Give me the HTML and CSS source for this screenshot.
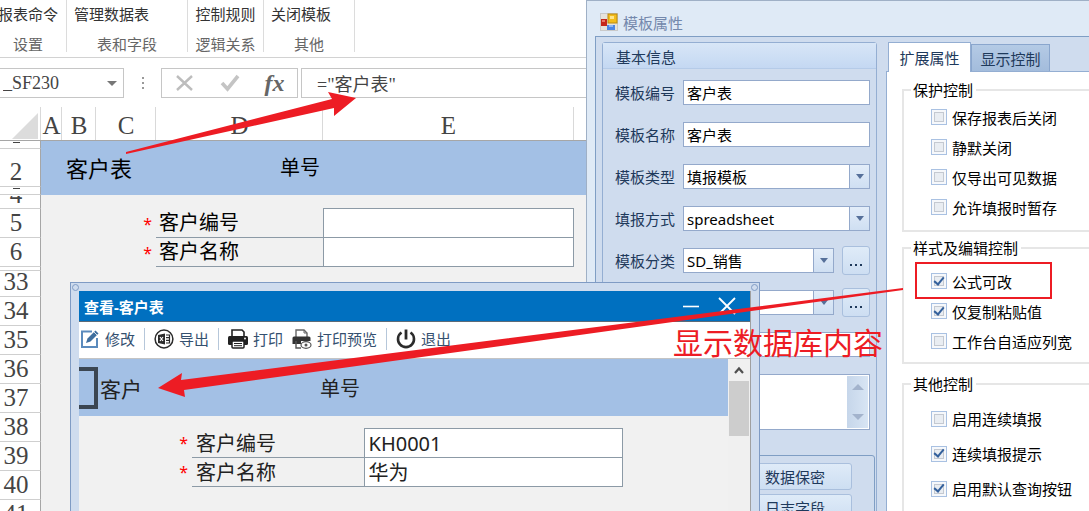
FILE: index.html
```html
<!DOCTYPE html>
<html lang="zh-CN">
<head>
  <meta charset="UTF-8">
  <meta name="viewport" content="width=device-width, initial-scale=1.0">
  <title>模板属性</title>
  <link rel="stylesheet" href="styles.css">
</head>
<body>
  <div class="desktop">

    <!-- 表格设计界面 -->
    <div class="workbook">
      <div class="ribbon">
        <div class="ribbon-group group-setting">
          <button class="ribbon-btn">报表命令</button>
          <span class="ribbon-name">设置</span>
        </div>
        <div class="ribbon-group group-table">
          <button class="ribbon-btn">管理数据表</button>
          <span class="ribbon-name">表和字段</span>
        </div>
        <div class="ribbon-group group-logic">
          <button class="ribbon-btn">控制规则</button>
          <span class="ribbon-name">逻辑关系</span>
        </div>
        <div class="ribbon-group group-other">
          <button class="ribbon-btn">关闭模板</button>
          <span class="ribbon-name">其他</span>
        </div>
      </div>

      <div class="formula-bar">
        <div class="name-box">
          <input type="text" value="_SF230" aria-label="名称框">
          <span class="caret"></span>
        </div>
        <span class="grip"><i></i><i></i><i></i></span>
        <div class="formula-tools">
          <button aria-label="取消">
            <svg width="20" height="18" viewBox="0 0 20 18"><path d="M2 2 L17 16 M17 2 L2 16" fill="none" stroke="#bdbdbd" stroke-width="2.4"/></svg>
          </button>
          <button aria-label="输入">
            <svg width="20" height="18" viewBox="0 0 20 18"><path d="M2 9 L7.500 15 L18 2" fill="none" stroke="#c4c4c4" stroke-width="3.600"/></svg>
          </button>
          <button class="fx" aria-label="插入函数">fx</button>
        </div>
        <input class="formula" type="text" value='="客户表"' aria-label="编辑栏">
      </div>

      <table class="sheet">
        <colgroup>
          <col class="col-head"><col class="col-a"><col class="col-b"><col class="col-c"><col class="col-d"><col class="col-e"><col>
        </colgroup>
        <thead>
          <tr>
            <th class="corner"><svg width="26" height="26" viewBox="0 0 26 26"><path d="M26 0 V26 H0 Z" fill="#dcdcdc"/></svg></th>
            <th>A</th><th>B</th><th>C</th><th>D</th><th>E</th><th></th>
          </tr>
        </thead>
        <tbody>
          <tr class="band row-thin"><th><div class="sliver"></div></th><td colspan="6"></td></tr>
          <tr class="band row-title"><th>2</th><td></td><td colspan="2" class="title">客户表</td><td class="number">单号</td><td></td><td></td></tr>
          <tr class="band row-thin"><th><div class="sliver"></div></th><td colspan="6"></td></tr>
          <tr class="row-short"><th><div class="clip">4</div></th><td colspan="4"></td><td class="edge"></td><td></td></tr>
          <tr><th>5</th><td></td><td></td><td class="star">*</td><td class="caption">客户编号</td><td class="field"></td><td></td></tr>
          <tr><th>6</th><td></td><td></td><td class="star">*</td><td class="caption">客户名称</td><td class="field"></td><td></td></tr>
          <tr class="row-gap"><th></th><td colspan="6"></td></tr>
          <tr class="row-first"><th>33</th><td colspan="6"></td></tr>
          <tr><th>34</th><td colspan="6"></td></tr>
          <tr><th>35</th><td colspan="6"></td></tr>
          <tr><th>36</th><td colspan="6"></td></tr>
          <tr><th>37</th><td colspan="6"></td></tr>
          <tr><th>38</th><td colspan="6"></td></tr>
          <tr><th>39</th><td colspan="6"></td></tr>
          <tr><th>40</th><td colspan="6"></td></tr>
          <tr><th>41</th><td colspan="6"></td></tr>
        </tbody>
      </table>
    </div>

    <!-- 模板属性窗口 -->
    <section class="props">
      <header class="props-title">
        <svg width="18" height="18" viewBox="0 0 18 18">
          <rect x="0.500" y="0.500" width="17" height="17" fill="#e6e3dc" stroke="#c9c9c9"/>
          <rect x="1" y="6" width="6" height="7" fill="#c5281c"/>
          <rect x="2" y="7" width="3" height="2" fill="#e8786a"/>
          <rect x="8" y="1" width="9" height="9" fill="#f3bd1c" stroke="#b98a10"/>
          <rect x="10" y="3" width="4" height="3" fill="#ffe58a"/>
          <rect x="7" y="12" width="8" height="5" fill="#4b86e6"/>
          <rect x="9" y="12" width="4" height="2" fill="#8db8f7"/>
        </svg>
        <span>模板属性</span>
      </header>
      <div class="props-body">
        <div class="panel">
          <h2>基本信息</h2>
          <div class="form">
            <div class="form-row">
              <label for="code">模板编号</label>
              <input type="text" id="code" value="客户表">
            </div>
            <div class="form-row">
              <label for="name">模板名称</label>
              <input type="text" id="name" value="客户表">
            </div>
            <div class="form-row">
              <label for="type">模板类型</label>
              <div class="combo"><select id="type"><option>填报模板</option></select><span class="drop"></span></div>
            </div>
            <div class="form-row">
              <label for="mode">填报方式</label>
              <div class="combo"><select id="mode"><option>spreadsheet</option></select><span class="drop"></span></div>
            </div>
            <div class="form-row">
              <label for="category">模板分类</label>
              <div class="combo"><select id="category"><option>SD_销售</option></select><span class="drop"></span></div>
              <button class="more" aria-label="选择分类"><i></i><i></i><i></i></button>
            </div>
            <div class="form-row">
              <span class="no-label"></span>
              <div class="combo"><select aria-label="选项"><option></option></select><span class="drop"></span></div>
              <button class="more" aria-label="选择"><i></i><i></i><i></i></button>
            </div>
            <div class="form-row">
              <span class="no-label"></span>
              <input type="text" aria-label="标题">
            </div>
            <div class="form-row memo-row">
              <span class="no-label"></span>
              <div class="memo">
                <textarea aria-label="说明"></textarea>
                <div class="memo-scroll"><i class="up"></i><i class="down"></i></div>
              </div>
            </div>
          </div>
          <div class="actions">
            <button>数据保密</button>
            <button>日志字段</button>
          </div>
        </div>

        <div class="tabs">
          <div class="tab-bar">
            <button class="tab active">扩展属性</button>
            <button class="tab">显示控制</button>
          </div>
          <div class="tab-page">
            <fieldset class="group-protect">
              <legend>保护控制</legend>
              <label><input type="checkbox">保存报表后关闭</label>
              <label><input type="checkbox">静默关闭</label>
              <label><input type="checkbox">仅导出可见数据</label>
              <label><input type="checkbox">允许填报时暂存</label>
            </fieldset>
            <fieldset class="group-style">
              <legend>样式及编辑控制</legend>
              <label><input type="checkbox" checked>公式可改</label>
              <label><input type="checkbox" checked>仅复制粘贴值</label>
              <label><input type="checkbox">工作台自适应列宽</label>
            </fieldset>
            <fieldset class="group-misc">
              <legend>其他控制</legend>
              <label><input type="checkbox">启用连续填报</label>
              <label><input type="checkbox" checked>连续填报提示</label>
              <label><input type="checkbox" checked>启用默认查询按钮</label>
            </fieldset>
          </div>
        </div>
      </div>
    </section>

    <!-- 查看窗口 -->
    <section class="viewer">
      <i class="handle handle-left"></i>
      <i class="handle handle-right"></i>
      <div class="viewer-frame">
        <header class="viewer-title">
          <span>查看-客户表</span>
          <button aria-label="最小化"><svg width="18" height="18" viewBox="0 0 18 18"><path d="M1 9.500 H17" stroke="#fff" stroke-width="1.600"/></svg></button>
          <button aria-label="关闭"><svg width="18" height="18" viewBox="0 0 18 18"><path d="M1 1 L17 17 M17 1 L1 17" stroke="#fff" stroke-width="1.800"/></svg></button>
        </header>
        <div class="toolbar">
          <button>
            <svg width="20" height="20" viewBox="0 0 20 20"><path d="M12 2.500 H2 V18 H17 V9" fill="none" stroke="#5b8bbd" stroke-width="2"/><path d="M6 14 L7.500 9.500 L15.500 1.500 L18.500 4.500 L10.500 12.500 Z" fill="#3f6f9f"/><path d="M14 3 L17 6" stroke="#fff" stroke-width="0.800"/></svg>
            修改
          </button>
          <i class="sep"></i>
          <button>
            <svg width="20" height="20" viewBox="0 0 20 20"><circle cx="10" cy="10" r="8.900" fill="#fff" stroke="#2b2b2b" stroke-width="1.500"/><path d="M4 6 L11 4.500 V15.500 L4 14 Z" fill="#2b2b2b"/><path d="M6 8 L9 12 M9 8 L6 12" stroke="#fff" stroke-width="1.200"/><path d="M12 6 H15.500 V14 H12 M12 8.700 H15 M12 11.300 H15" fill="none" stroke="#2b2b2b" stroke-width="1.200"/></svg>
            导出
          </button>
          <i class="sep"></i>
          <button>
            <svg width="20" height="20" viewBox="0 0 20 20"><path d="M4 7 V1 H14 L16 3 V7" fill="#fff" stroke="#222" stroke-width="1.600"/><rect x="0" y="7" width="20" height="9" rx="1.500" fill="#222"/><rect x="4" y="12" width="12" height="7" rx="1" fill="#fff" stroke="#222" stroke-width="1.500"/><path d="M6 14.500 H14 M6 16.700 H14" stroke="#222"/><circle cx="17" cy="9.500" r="0.900" fill="#fff"/></svg>
            打印
          </button>
          <button>
            <svg width="20" height="20" viewBox="0 0 20 20"><path d="M4 8 V1 H12 L15 4 V8" fill="#fff" stroke="#666" stroke-width="1.400"/><path d="M12 1 V4 H15" fill="none" stroke="#666"/><path d="M0.500 9 Q0.500 7.500 2 7.500 H17 Q18.500 7.500 18.500 9 V12 H9 V15 H0.500 Z" fill="#333"/><path d="M4 12 V19 H9" fill="none" stroke="#555" stroke-width="1.400"/><ellipse cx="14" cy="16" rx="5" ry="3.300" fill="#fff" stroke="#555" stroke-width="1.200"/><circle cx="14" cy="16" r="1.500" fill="#555"/></svg>
            打印预览
          </button>
          <i class="sep"></i>
          <button>
            <svg width="20" height="20" viewBox="0 0 20 20"><path d="M5.500 3.500 A8 8 0 1 0 14.500 3.500" fill="none" stroke="#2b2b2b" stroke-width="2.600"/><path d="M10 0.500 V10.500" stroke="#2b2b2b" stroke-width="2.800"/></svg>
            退出
          </button>
        </div>
        <div class="viewer-content">
          <div class="viewer-page">
            <div class="viewer-band">
              <i class="cursor-cell"></i>
              <span class="viewer-name">客户</span>
              <span class="viewer-number">单号</span>
            </div>
            <table class="record">
              <tr><td class="star">*</td><th>客户编号</th><td class="value">KH0001</td></tr>
              <tr><td class="star">*</td><th>客户名称</th><td class="value">华为</td></tr>
            </table>
          </div>
          <div class="scrollbar">
            <svg width="20" height="22" viewBox="0 0 20 22"><path d="M6 14 L10 9.500 L14 14" fill="none" stroke="#505050" stroke-width="2.200"/></svg>
            <i class="thumb"></i>
          </div>
        </div>
      </div>
    </section>

    <!-- 标注 -->
    <svg class="marks" width="1089" height="511" viewBox="0 0 1089 511">
      <path d="M126 152 L332 99 L328 92 L356 98 L334 116 L334 108 L126 154 Z" fill="#ed1c24"/>
      <path d="M903 288 L181 380 L182 373 L158 388 L185 397 L184 390 L903 290 Z" fill="#ed1c24"/>
      <rect x="916" y="263" width="135" height="35" fill="none" stroke="#ed1c24" stroke-width="2"/>
    </svg>
    <p class="note">显示数据库内容</p>
  </div>
</body>
</html>
```

FILE: styles.css
```css
*, *::before, *::after {
    box-sizing: border-box;
}
body {
    margin: 0;
    font-family: "Noto Sans", "Noto Sans CJK SC", sans-serif;
    font-size: 15px;
    color: #000;
}
button,
input,
select,
textarea {
    font: inherit;
    color: inherit;
    margin: 0;
    padding: 0;
    border: none;
    border-radius: 0;
    background: none;
    outline: none;
}
button {
    white-space: nowrap;
}
svg {
    display: block;
    flex: none;
}
.desktop {
    position: relative;
    height: 100vh;
    overflow: hidden;
    background: #fff;
}

/* ribbon */
.ribbon {
    display: flex;
    height: 58px;
    padding-bottom: 5px;
    border-bottom: 1px solid #d2d2d2;
}
.ribbon-group {
    display: flex;
    flex-direction: column;
    align-items: center;
    gap: 10px;
    padding-top: 4px;
    border-right: 1px solid #dcdcdc;
    line-height: 20px;
}
.ribbon-btn {
    color: #333;
    line-height: 20px;
}
.ribbon-name {
    color: #666;
}
.group-setting {
    width: 67px;
}
.group-setting .ribbon-btn {
    align-self: flex-end;
    margin-right: 8px;
}
.group-setting .ribbon-name {
    margin-right: 10px;
}
.group-table {
    width: 121px;
}
.group-table .ribbon-btn {
    align-self: flex-start;
    margin-left: 7px;
}
.group-logic {
    width: 76px;
}
.group-other {
    width: 91px;
}
.group-other .ribbon-btn {
    align-self: flex-start;
    margin-left: 7px;
}

/* formula bar */
.formula-bar {
    display: flex;
    height: 40px;
    padding-top: 10px;
    font-family: "Liberation Serif", "Noto Sans CJK SC", serif;
    font-size: 18px;
    color: #444;
}
.name-box {
    display: flex;
    align-items: center;
    width: 124px;
    padding: 0 6px 0 3px;
    border: 1px solid #c6c6c6;
    border-left: none;
}
.name-box input {
    flex: 1;
    min-width: 0;
}
.caret {
    border: 5px solid transparent;
    border-top-color: #777;
    border-bottom: none;
}
.grip {
    display: flex;
    flex-direction: column;
    justify-content: center;
    align-items: center;
    gap: 3px;
    width: 37px;
}
.grip i {
    width: 2px;
    height: 2px;
    background: #999;
}
.formula-tools {
    display: flex;
    justify-content: space-around;
    align-items: center;
    width: 137px;
    border: 1px solid #c6c6c6;
}
.fx {
    font-size: 24px;
    font-style: italic;
    font-weight: bold;
    line-height: 24px;
    color: #666;
}
.formula {
    flex: 1;
    min-width: 0;
    margin-left: 3px;
    padding-left: 15px;
    border: 1px solid #c6c6c6;
}

/* sheet */
.sheet {
    width: 100%;
    table-layout: fixed;
    border-collapse: separate;
    border-spacing: 0;
    background: #f1f1f1;
}
.col-head {
    width: 41px;
}
.col-a {
    width: 21px;
}
.col-b {
    width: 34px;
}
.col-c {
    width: 60px;
}
.col-d {
    width: 167px;
}
.col-e {
    width: 251px;
}
.sheet th,
.sheet td {
    height: 29px;
    padding: 0;
    line-height: 24px;
    white-space: nowrap;
}
.sheet th {
    background: #fff;
    font-family: "Liberation Serif", serif;
    font-size: 25px;
    font-weight: normal;
    color: #444;
}
.sheet thead th {
    height: 43px;
    padding-top: 14px;
    border-bottom: 1px solid #a6a6a6;
    background: linear-gradient(#d9d9d9, #d9d9d9) right bottom / 1px 33px no-repeat #fff;
}
.sheet .corner svg {
    margin: 0 3px 0 auto;
}
.sheet tbody th {
    padding-right: 8px;
    border-right: 1px solid #a6a6a6;
    border-bottom: 1px solid #cfcfcf;
}
.sheet .band td {
    background: #a3c0e5;
}
.sheet .row-thin th,
.sheet .row-thin td {
    height: 8px;
}
.sliver {
    width: 7px;
    height: 6px;
    margin: 0 auto;
    border-top: 1px solid #444;
}
.sheet .row-title th,
.sheet .row-title td {
    height: 38px;
}
.sheet .row-title th {
    padding-top: 8px;
}
.sheet .row-short th,
.sheet .row-short td {
    height: 14px;
}
.clip {
    display: flex;
    flex-direction: column;
    justify-content: flex-end;
    align-items: center;
    height: 8px;
    margin-bottom: 4px;
    line-height: 18px;
    overflow: hidden;
}
.sheet .row-gap th,
.sheet .row-gap td {
    height: 4px;
}
.sheet .row-first th,
.sheet .row-first td {
    height: 26px;
}
.sheet .row-first th {
    line-height: 20px;
    padding-bottom: 4px;
}
.sheet .title {
    padding-left: 4px;
    font-size: 22px;
}
.sheet .number {
    padding-right: 3px;
    font-size: 20px;
    text-align: right;
}
.sheet .star {
    padding-right: 4px;
    font-size: 16px;
    text-align: right;
}
.star {
    color: #f00;
}
.sheet .caption {
    padding-left: 3px;
    border-bottom: 1px solid #8c9aa6;
    font-size: 20px;
}
.sheet .edge {
    border-bottom: 1px solid #8c9aa6;
}
.sheet .field {
    border: 1px solid #8c9aa6;
    border-top: none;
    background: #fff;
}

/* template properties window */
.props {
    position: absolute;
    top: 0;
    right: 0;
    bottom: 0;
    left: 586px;
    display: flex;
    flex-direction: column;
    border-top: 1px solid #9fb0c6;
    border-left: 1px solid #9fb0c6;
    background: #dfeaf6;
    overflow: hidden;
}
.props-title {
    display: flex;
    align-items: center;
    gap: 5px;
    height: 35px;
    padding: 7px 0 0 13px;
    color: #7488ac;
}
.props-body {
    display: flex;
    flex: 1;
    min-height: 0;
    gap: 9px;
    margin-left: 8px;
    padding: 5px 0 0 6px;
    border-top: 1px solid #7f9ec4;
    border-left: 1px solid #7f9ec4;
    background: #cfdcee;
}
.panel {
    flex: none;
    width: 275px;
    height: 600px;
    border: 1px solid #94aed2;
    border-radius: 3px;
    color: #1e395b;
}
.panel h2 {
    height: 26px;
    margin: 0;
    padding: 2px 0 0 13px;
    border-bottom: 1px solid #b5cbe8;
    background: linear-gradient(#d8e6f7, #c4d8f2);
    font-size: 15px;
    font-weight: normal;
    line-height: 24px;
}
.form {
    display: flex;
    flex-direction: column;
    gap: 17px;
    padding: 11px 6px 0 12px;
}
.form-row {
    display: flex;
    align-items: center;
    gap: 8px;
    height: 25px;
}
.form-row label,
.no-label {
    flex: none;
    width: 60px;
    line-height: 24px;
}
.form-row input,
.combo,
.memo {
    flex: 1;
    min-width: 0;
    height: 25px;
    border: 1px solid #94a9cb;
    background: #fff;
    color: #000;
}
.form-row input {
    padding: 0 3px;
}
.combo {
    display: flex;
}
.combo select {
    flex: 1;
    min-width: 0;
    padding-left: 3px;
    appearance: none;
}
.drop {
    display: flex;
    justify-content: center;
    align-items: center;
    width: 20px;
    border-left: 1px solid #94a9cb;
    background: linear-gradient(#e3edf9, #cfdff2);
}
.drop::after {
    content: "";
    border: 4px solid transparent;
    border-top: 5px solid #56709a;
    border-bottom: none;
}
.more {
    display: flex;
    justify-content: center;
    align-items: center;
    gap: 3px;
    width: 28px;
    height: 29px;
    padding-top: 8px;
    border: 1px solid #a9bfdd;
    border-radius: 3px;
    background: linear-gradient(#dfebf8, #cddef2);
}
.more i {
    width: 2px;
    height: 2px;
    background: #1e395b;
}
.form-row.memo-row {
    height: 56px;
}
.memo {
    display: flex;
    height: 56px;
    padding: 1px;
}
.memo textarea {
    flex: 1;
    min-width: 0;
    resize: none;
}
.memo-scroll {
    display: flex;
    flex-direction: column;
    justify-content: space-between;
    align-items: center;
    width: 21px;
    padding: 8px 0;
    background: linear-gradient(to right, #c6d6ea, #d8e5f4);
}
.up,
.down {
    border: 6px solid transparent;
}
.up {
    border-top: none;
    border-bottom-color: #a3b3cc;
}
.down {
    border-top-color: #a3b3cc;
    border-bottom: none;
}
.actions {
    display: flex;
    flex-direction: column;
    align-items: flex-end;
    gap: 4px;
    height: 120px;
    margin: 25px 1px 0;
    padding: 7px 22px 0 0;
    border: 1px solid #7f9ec4;
    border-radius: 3px;
}
.actions button {
    width: 114px;
    height: 27px;
    border: 1px solid #a9bfdd;
    border-radius: 3px;
    background: linear-gradient(#dfebf8, #cddef2);
}

/* tabs */
.tabs {
    display: flex;
    flex-direction: column;
    flex: 1;
    min-width: 0;
}
.tab-bar {
    display: flex;
    align-items: flex-end;
    height: 30px;
    padding-left: 2px;
    border-bottom: 1px solid #94aed2;
}
.tab {
    width: 79px;
    height: 27px;
    border: 1px solid #8aa6cd;
    border-bottom: none;
    background: linear-gradient(#b4cae5, #a3bcdc);
    color: #1e395b;
}
.tab.active {
    width: 83px;
    height: 30px;
    margin-bottom: -1px;
    border-color: #94aed2;
    background: #fff;
}
.tab-page {
    flex: 1;
    min-height: 0;
    padding: 8px 0 0 15px;
    border-left: 1px solid #94aed2;
    background: #fff;
    overflow: hidden;
}
fieldset {
    margin: 0;
    padding: 2px 0 8px 27px;
    border: 2px solid #e6e6e6;
    border-right: none;
}
legend {
    margin-left: -20px;
    padding: 0 3px 0 2px;
    line-height: 20px;
}
fieldset label {
    display: flex;
    align-items: center;
    gap: 5px;
    height: 30px;
    white-space: nowrap;
}
.group-style {
    margin-top: 6px;
    padding-top: 8px;
    padding-bottom: 6px;
}
.group-misc {
    margin-top: 10px;
    padding-top: 7px;
    padding-bottom: 30px;
}
.group-misc label {
    height: 35px;
}
fieldset input {
    display: flex;
    justify-content: center;
    align-items: center;
    flex: none;
    width: 16px;
    height: 16px;
    appearance: none;
    border: 1px solid #a9c1e2;
    background: #e9edf2;
    box-shadow: inset 0 0 0 2px #f6f8fb, inset 0 0 0 3px #c4c9d1;
}
fieldset input:checked::after {
    content: "";
    width: 6px;
    height: 10px;
    margin-bottom: 3px;
    border: solid #33609c;
    border-width: 0 2px 2px 0;
    transform: rotate(40deg);
}

/* viewer window */
.viewer {
    position: absolute;
    top: 282px;
    bottom: -10px;
    left: 70px;
    width: 690px;
    padding: 8px 8px 0;
    border: 1px solid #7f9bc4;
    background: #cfdcee;
}
.handle {
    position: absolute;
    top: 1px;
    width: 7px;
    height: 7px;
    border: 1px solid #7f9bc4;
    border-radius: 50%;
}
.handle-left {
    left: 1px;
}
.handle-right {
    right: 1px;
}
.viewer-frame {
    display: flex;
    flex-direction: column;
    height: 100%;
    border-right: 1px solid #a0a0a0;
    background: #fff;
}
.viewer-title {
    display: flex;
    align-items: center;
    gap: 18px;
    height: 31px;
    padding: 0 14px 0 5px;
    border-bottom: 1px solid #5c6b78;
    background: #0070c0;
    color: #fff;
    font-weight: bold;
}
.viewer-title span {
    flex: 1;
}
.toolbar {
    display: flex;
    align-items: center;
    height: 37px;
    padding: 0 0 2px 1px;
    border-bottom: 1px solid #c4c4c4;
    color: #34506f;
}
.toolbar button {
    display: flex;
    align-items: center;
    gap: 5px;
    line-height: 24px;
}
.toolbar button + button {
    margin-left: 9px;
}
.sep {
    width: 1px;
    height: 22px;
    margin: 0 9px;
    background: #b6c7da;
}
.viewer-content {
    display: flex;
    flex: 1;
    min-height: 0;
    background: #f1f1f1;
}
.viewer-page {
    flex: 1;
    min-width: 0;
    color: #222;
}
.viewer-band {
    display: flex;
    align-items: center;
    height: 57px;
    background: #a3c0e5;
    font-size: 20px;
}
.cursor-cell {
    width: 19px;
    height: 42px;
    border: 4px solid #3b4652;
    border-left: none;
}
.viewer-name {
    width: 220px;
    padding-left: 2px;
    font-size: 21px;
}
.viewer-number {
    padding-left: 2px;
}
.record {
    margin: 12px 0 0 93px;
    border-collapse: collapse;
    font-size: 20px;
}
.record th,
.record td {
    height: 29px;
    padding: 2px 4px 0;
    line-height: 24px;
    text-align: left;
    font-weight: normal;
}
.record .star {
    width: 20px;
    padding: 0 4px 0 0;
    font-size: 16px;
    text-align: right;
}
.record th {
    width: 172px;
    border-bottom: 1px solid #8c9aa6;
}
.record .value {
    width: 258px;
    border: 1px solid #8c9aa6;
    background: #fff;
}
.scrollbar {
    width: 22px;
    padding: 0 1px;
    background: #f0f0f0;
}
.thumb {
    display: block;
    height: 55px;
    background: #cdcdcd;
}

/* red marks over the windows */
.marks {
    position: absolute;
    top: 0;
    left: 0;
    pointer-events: none;
}
.note {
    position: absolute;
    top: 323px;
    left: 673px;
    margin: 0;
    color: #ed1c24;
    font-size: 30px;
    line-height: 40px;
    white-space: nowrap;
}
```
